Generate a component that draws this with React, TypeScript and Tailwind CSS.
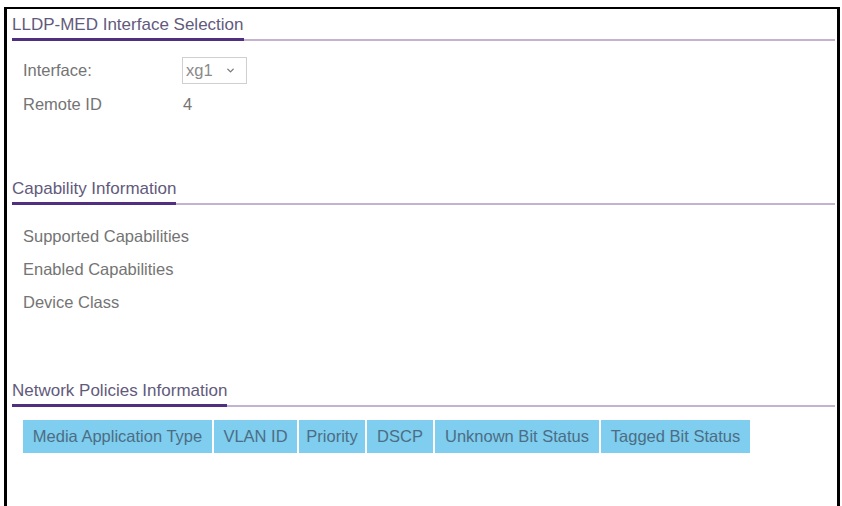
import { ChevronDown } from "lucide-react";

const font = { fontFamily: '"Liberation Sans", Arial, sans-serif' };

function SectionTitle({ title }: { title: string }) {
  return (
    <div className="ml-[5px] mr-[2px] flex border-b-2 border-[#c3b3d0]">
      <span className="-mb-[2px] border-b-[3px] border-[#522e80] pb-[3px] text-[17px] leading-5 text-[#625a7c]">
        {title}
      </span>
    </div>
  );
}

const columns = [
  { label: "Media Application Type", w: "w-[189px]" },
  { label: "VLAN ID", w: "w-[83px]" },
  { label: "Priority", w: "w-[66px]" },
  { label: "DSCP", w: "w-[66px]" },
  { label: "Unknown Bit Status", w: "w-[164px]" },
  { label: "Tagged Bit Status", w: "w-[149px]" },
];

export default function App() {
  return (
    <div className="h-[506px] w-[842px] overflow-hidden bg-white pl-[4px] pr-[2px] pt-[7px]" style={font}>
      <div className="h-full border-l-[3px] border-r-[3px] border-t-2 border-black pt-[6px]">
        <SectionTitle title="LLDP-MED Interface Selection" />

        <div className="ml-[16px] mt-[16px] flex flex-col gap-[10px] text-[16.5px] text-[#747474]">
          <div className="flex h-[27px] items-center">
            <span className="w-[159px]">Interface:</span>
            <div className="flex h-[27px] w-[65px] items-center justify-between border border-[#cfcfcf] pl-[3px] pr-[10px] text-[#8a8a8a]">
              <span>xg1</span>
              <ChevronDown size={11} strokeWidth={3} className="text-[#7a7a7a]" />
            </div>
          </div>
          <div className="flex h-5 items-center leading-5">
            <span className="w-[160px]">Remote ID</span>
            <span>4</span>
          </div>
        </div>

        <div className="mt-[65px]">
          <SectionTitle title="Capability Information" />
        </div>

        <div className="ml-[16px] mt-[21px] flex flex-col gap-[13px] text-[16.5px] leading-5 text-[#747474]">
          <span>Supported Capabilities</span>
          <span>Enabled Capabilities</span>
          <span>Device Class</span>
        </div>

        <div className="mt-[69px]">
          <SectionTitle title="Network Policies Information" />
        </div>

        <div className="ml-[16px] mt-[13px] flex gap-[2px]">
          {columns.map((c) => (
            <div
              key={c.label}
              className={`${c.w} flex h-[33px] items-center justify-center whitespace-nowrap bg-[#7fcdef] text-[16.5px] text-[#4c6d84]`}
            >
              {c.label}
            </div>
          ))}
        </div>
      </div>
    </div>
  );
}
